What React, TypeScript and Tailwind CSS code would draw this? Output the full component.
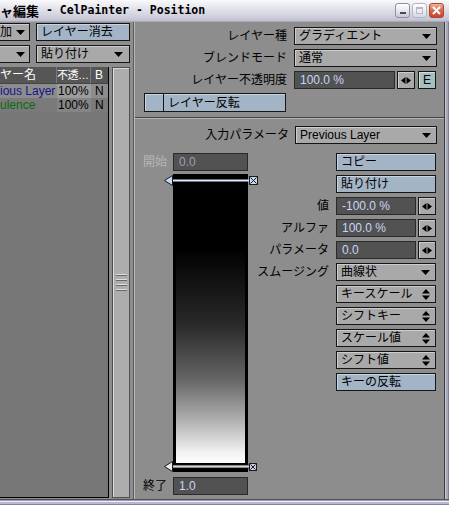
import React from "react";

function DownArrow() {
  return (
    <svg width="9" height="5" viewBox="0 0 9 5">
      <path d="M0 0H9L4.5 5Z" fill="#000" />
    </svg>
  );
}

function UpDown() {
  return (
    <svg width="8" height="11" viewBox="0 0 8 11">
      <path d="M4 0L8 4.5H0Z M0 6.5H8L4 11Z" fill="#000" />
    </svg>
  );
}

function LR() {
  return (
    <svg width="10" height="7" viewBox="0 0 10 7">
      <path d="M0 3.5L4.5 0V7Z M5.5 0L10 3.5L5.5 7Z" fill="#000" />
    </svg>
  );
}

function Dropdown({ text, w, icon }: { text: string; w: string; icon?: "down" | "updown" }) {
  return (
    <div
      className={`h-[18px] shrink-0 flex items-center justify-between border border-[#151515] bg-[#a9a9a9] shadow-[inset_1px_1px_0_#cdcdcd] pl-[4px] pr-[5px] whitespace-nowrap ${w}`}
    >
      <span>{text}</span>
      {icon === "updown" ? <UpDown /> : <DownArrow />}
    </div>
  );
}

function BlueButton({ text, w }: { text: string; w: string }) {
  return (
    <div
      className={`h-[18px] shrink-0 flex items-center border border-[#151515] bg-[#a3b4c6] shadow-[inset_1px_1px_0_#c8d4e2] pl-[4px] whitespace-nowrap ${w}`}
    >
      {text}
    </div>
  );
}

function Input({ text, w, dim }: { text: string; w: string; dim?: boolean }) {
  return (
    <div
      className={`h-[18px] shrink-0 flex items-center border border-[#2a2a2a] bg-[#525252] pl-[5px] whitespace-nowrap ${
        dim ? "text-[#9aa2b2]" : "text-[#c8d6f6]"
      } ${w}`}
    >
      {text}
    </div>
  );
}

function LRButton() {
  return (
    <div className="h-[18px] w-[18px] shrink-0 flex items-center justify-center border border-[#151515] bg-[#a9a9a9] shadow-[inset_1px_1px_0_#cdcdcd]">
      <LR />
    </div>
  );
}

function TitleBar() {
  return (
    <div className="h-[22px] shrink-0 flex items-center bg-[linear-gradient(to_bottom,#fafafc,#e6e6ee_35%,#d2d2de_75%,#c0c0d0)] border-b border-[#a8a8b8]">
      <div className="flex items-center whitespace-nowrap font-bold">
        <span className="text-[13px] font-['Noto_Sans_CJK_JP',sans-serif]">ャ編集</span>
        <span className="text-[11.5px] font-['DejaVu_Sans_Mono',monospace]">&nbsp;- CelPainter - Position</span>
      </div>
      <div className="ml-auto mr-[5px] flex gap-[2px]">
        <div className="w-[15px] h-[15px] rounded-[3px] border border-[#8e8ea8] bg-[linear-gradient(to_bottom,#ffffff,#e6e6f0_55%,#c6c6d8)] flex items-end justify-center pb-[3px]">
          <div className="w-[6px] h-[2px] bg-[#4a4a5c]" />
        </div>
        <div className="w-[15px] h-[15px] rounded-[3px] border border-[#b4b4c6] bg-[linear-gradient(to_bottom,#ffffff,#ececf2_55%,#d6d6e2)] flex items-center justify-center">
          <div className="w-[7px] h-[7px] border border-[#b8b8c8] border-t-2" />
        </div>
        <div className="w-[15px] h-[15px] rounded-[3px] border border-[#a24a3a] bg-[linear-gradient(to_bottom,#f4b09a,#e0664a_50%,#c8452c)] flex items-center justify-center">
          <svg width="9" height="9" viewBox="0 0 9 9">
            <path d="M1 1L8 8M8 1L1 8" stroke="#fff" strokeWidth="2" />
          </svg>
        </div>
      </div>
    </div>
  );
}

function LeftPanel() {
  return (
    <div className="w-[130px] shrink-0 flex flex-col pt-[1px] pb-[1px]">
      <div className="flex gap-[6px] h-[18px]">
        <div className="w-[30px] h-[18px] flex items-center justify-between border-y border-r border-[#151515] bg-[#a9a9a9] shadow-[inset_0_1px_0_#cdcdcd] pr-[4px]">
          <span>加</span>
          <DownArrow />
        </div>
        <BlueButton text="レイヤー消去" w="w-[94px]" />
      </div>
      <div className="flex gap-[6px] h-[18px] mt-[4px]">
        <div className="w-[30px] h-[18px] flex items-center justify-end border-y border-r border-[#151515] bg-[#a9a9a9] shadow-[inset_0_1px_0_#cdcdcd] pr-[4px]">
          <DownArrow />
        </div>
        <div className="w-[94px] h-[18px] flex items-center justify-between border border-[#151515] bg-[#a9a9a9] shadow-[inset_1px_1px_0_#cdcdcd] pl-[4px] pr-[6px]">
          <span>貼り付け</span>
          <DownArrow />
        </div>
      </div>
      <div className="flex flex-1 mt-[4px] min-h-0">
        <div className="w-[109px] shrink-0 border-r border-b border-black bg-[#777777] flex flex-col">
          <div className="h-[17px] flex bg-[#565656] text-white border-b border-[#444]">
            <div className="w-[57px] flex items-center border-r border-[#7a7a7a] overflow-hidden whitespace-nowrap">
              <span>ヤー名</span>
            </div>
            <div className="w-[34px] flex items-center border-r border-[#7a7a7a] overflow-hidden whitespace-nowrap text-[11px] tracking-[-0.5px]">
              不透…
            </div>
            <div className="flex-1 flex items-center pl-[4px]">B</div>
          </div>
          <div className="h-[14px] flex">
            <div className="w-[57px] flex items-center bg-[#8c8c8c] text-[#16168c] overflow-hidden whitespace-nowrap">
              <span>ious Layer</span>
            </div>
            <div className="w-[34px] flex items-center bg-[#9c9c9c] pl-[1px]">100%</div>
            <div className="flex-1 flex items-center bg-[#8c8c8c] pl-[4px]">N</div>
          </div>
          <div className="h-[14px] flex">
            <div className="w-[57px] flex items-center bg-[#7a7a7a] text-[#0c6a0c] overflow-hidden whitespace-nowrap">
              <span>ulence</span>
            </div>
            <div className="w-[34px] flex items-center bg-[#858585] pl-[1px]">100%</div>
            <div className="flex-1 flex items-center bg-[#7a7a7a] pl-[4px]">N</div>
          </div>
        </div>
        <div className="ml-[3px] w-[18px] shrink-0 border border-[#505050] bg-[#adadad] shadow-[inset_1px_1px_0_#dadada] flex items-center justify-center">
          <div className="flex flex-col gap-[3px]">
            {[0, 1, 2, 3].map((i) => (
              <div key={i} className="w-[11px] h-[2px] border-t border-[#dedede] border-b border-b-[#6a6a6a]" />
            ))}
          </div>
        </div>
      </div>
    </div>
  );
}

function GradientBar() {
  return (
    <div className="relative ml-[30px] mt-[3px] w-[75px] h-[298px] bg-black px-[3px] pt-[3px] pb-[9px] flex flex-col">
      <div className="flex-1 bg-[linear-gradient(to_bottom,#000_0%,#000_25%,#2a2a2a_52%,#666_71%,#b0b0b0_85%,#f0f0f0_96%,#fff_100%)]" />
      <svg width="94" height="12" viewBox="0 0 94 12" className="absolute left-[-9px] top-[1px]">
        <rect x="8" y="4.5" width="78" height="2" fill="#dceaff" />
        <path d="M0.5 5.5L8.5 0.5V10.5Z" fill="#c6dcf4" stroke="#1a1a1a" />
        <rect x="85.5" y="1.5" width="8" height="8" fill="#c6dcf4" stroke="#1a1a1a" />
        <path d="M86.5 2.5L92.5 8.5M92.5 2.5L86.5 8.5" stroke="#1a1a1a" />
      </svg>
      <svg width="94" height="12" viewBox="0 0 94 12" className="absolute left-[-9px] top-[287px]">
        <rect x="8" y="4" width="78" height="3" fill="#d6d6d6" stroke="#1a1a1a" strokeWidth="0.8" />
        <path d="M0.5 5.5L8.5 0.5V10.5Z" fill="#ececec" stroke="#1a1a1a" />
        <rect x="85.5" y="2.5" width="7" height="7" fill="#c8d0dc" stroke="#1a1a1a" />
        <path d="M86.5 3.5L91.5 8.5M91.5 3.5L86.5 8.5" stroke="#1a1a1a" />
      </svg>
    </div>
  );
}

function RightRow({ label, children }: { label?: string; children: React.ReactNode }) {
  return (
    <div className="h-[18px] flex items-center justify-end gap-[7px]">
      {label ? <span className="whitespace-nowrap">{label}</span> : null}
      {children}
    </div>
  );
}

function RightPanel() {
  return (
    <div className="flex-1 ml-[3px] flex border-l border-[#5c5c5c] border-r border-r-[#3c3c3c]">
      <div className="flex-1 flex flex-col border-l border-[#b6b6b6]">
        <div className="h-[95px] shrink-0 flex flex-col pt-[5px] gap-[4px]">
          <div className="flex items-center h-[18px]">
            <span className="w-[152px] text-right whitespace-nowrap">レイヤー種</span>
            <div className="ml-[7px]">
              <Dropdown text="グラディエント" w="w-[143px]" />
            </div>
          </div>
          <div className="flex items-center h-[18px]">
            <span className="w-[152px] text-right whitespace-nowrap">ブレンドモード</span>
            <div className="ml-[7px]">
              <Dropdown text="通常" w="w-[143px]" />
            </div>
          </div>
          <div className="flex items-center h-[18px]">
            <span className="w-[152px] text-right whitespace-nowrap">レイヤー不透明度</span>
            <div className="ml-[7px] flex">
              <Input text="100.0 %" w="w-[101px]" />
              <div className="ml-[2px]">
                <LRButton />
              </div>
              <div className="ml-[3px] h-[18px] w-[18px] flex items-center justify-center border border-[#151515] bg-[#a6bfbf] shadow-[inset_1px_1px_0_#cde0e0]">
                E
              </div>
            </div>
          </div>
          <div className="ml-[9px] w-[142px] h-[19px] flex border border-[#151515] bg-[#a3b4c6] shadow-[inset_1px_1px_0_#c8d4e2]">
            <div className="w-[19px] border-r border-[#151515]" />
            <div className="flex items-center pl-[4px] whitespace-nowrap">レイヤー反転</div>
          </div>
        </div>
        <div className="flex-1 flex flex-col border-t border-[#444] min-h-0">
          <div className="flex-1 flex flex-col border-t border-[#b4b4b4] pt-[7px]">
            <div className="flex items-center h-[18px]">
              <span className="w-[154px] text-right whitespace-nowrap">入力パラメータ</span>
              <div className="ml-[6px]">
                <Dropdown text="Previous Layer" w="w-[142px]" />
              </div>
            </div>
            <div className="flex mt-[9px]">
              <div className="ml-[8px] flex flex-col">
                <div className="flex items-center h-[18px]">
                  <span className="w-[30px] text-[#b6b6b6]">開始</span>
                  <Input text="0.0" w="w-[75px]" dim />
                </div>
                <GradientBar />
                <div className="flex items-center h-[18px] mt-[5px]">
                  <span className="w-[30px]">終了</span>
                  <Input text="1.0" w="w-[75px]" />
                </div>
              </div>
              <div className="flex-1 flex flex-col gap-[4px] pr-[8px]">
                <RightRow>
                  <BlueButton text="コピー" w="w-[100px]" />
                </RightRow>
                <RightRow>
                  <BlueButton text="貼り付け" w="w-[100px]" />
                </RightRow>
                <RightRow label="値">
                  <div className="flex gap-[2px]">
                    <Input text="-100.0 %" w="w-[80px]" />
                    <LRButton />
                  </div>
                </RightRow>
                <RightRow label="アルファ">
                  <div className="flex gap-[2px]">
                    <Input text="100.0 %" w="w-[80px]" />
                    <LRButton />
                  </div>
                </RightRow>
                <RightRow label="パラメータ">
                  <div className="flex gap-[2px]">
                    <Input text="0.0" w="w-[80px]" />
                    <LRButton />
                  </div>
                </RightRow>
                <RightRow label="スムージング">
                  <Dropdown text="曲線状" w="w-[100px]" />
                </RightRow>
                <RightRow>
                  <Dropdown text="キースケール" w="w-[100px]" icon="updown" />
                </RightRow>
                <RightRow>
                  <Dropdown text="シフトキー" w="w-[100px]" icon="updown" />
                </RightRow>
                <RightRow>
                  <Dropdown text="スケール値" w="w-[100px]" icon="updown" />
                </RightRow>
                <RightRow>
                  <Dropdown text="シフト値" w="w-[100px]" icon="updown" />
                </RightRow>
                <RightRow>
                  <BlueButton text="キーの反転" w="w-[100px]" />
                </RightRow>
              </div>
            </div>
          </div>
        </div>
      </div>
    </div>
  );
}

export default function App() {
  return (
    <div className="w-[449px] h-[505px] overflow-hidden flex flex-col bg-[#8d8d8d] text-[12px] leading-none text-black font-['Liberation_Sans','Noto_Sans_CJK_JP',sans-serif]">
      <TitleBar />
      <div className="flex flex-1 min-h-0">
        <LeftPanel />
        <RightPanel />
        <div className="w-[4px] shrink-0 flex">
          <div className="w-[1px] bg-[#c8c8d0]" />
          <div className="w-[2px] bg-[#a8a8bc]" />
          <div className="w-[1px] bg-[#7c7c98]" />
        </div>
      </div>
      <div className="h-[6px] shrink-0 flex flex-col">
        <div className="h-[1px] bg-[#50505e]" />
        <div className="h-[1px] bg-[#9a9ab4]" />
        <div className="h-[1px] bg-[#f0f0f6]" />
        <div className="h-[2px] bg-[#b8b8cc]" />
        <div className="h-[1px] bg-[#8484a0]" />
      </div>
    </div>
  );
}
